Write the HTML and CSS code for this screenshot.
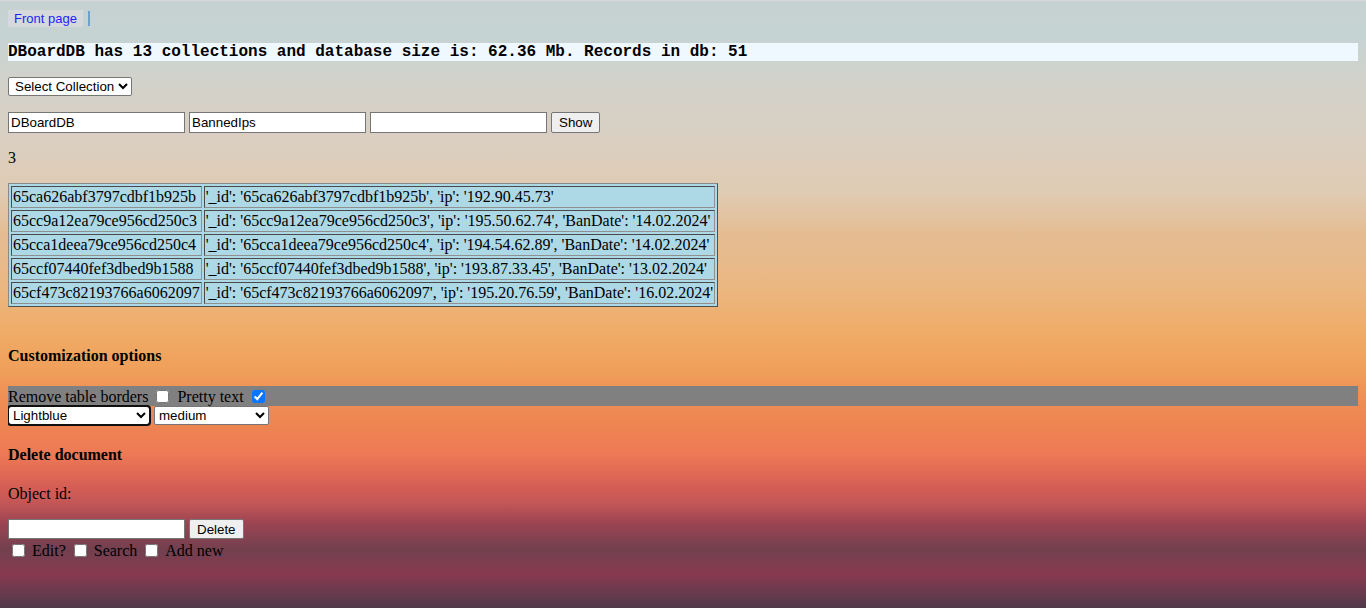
FILE: index.html
```html
<!DOCTYPE html>
<html>
<head>
<meta charset="utf-8">
<title>DBoard</title>
<link rel="stylesheet" href="styles.css">
</head>
<body>
<nav class="topnav">
  <a class="navlink" href="#">Front page</a>
  <span class="navsep"></span>
</nav>
<div class="dbinfo">DBoardDB has 13 collections and database size is: 62.36 Mb. Records in db: 51</div>
<div class="row">
  <select class="ctl sel-coll"><option>Select Collection</option></select>
</div>
<div class="row">
  <input class="ctl txt" type="text" value="DBoardDB">
  <input class="ctl txt" type="text" value="BannedIps">
  <input class="ctl txt" type="text" value="">
  <button class="ctl btn">Show</button>
</div>
<p class="count">3</p>
<table class="records">
  <tr><td>65ca626abf3797cdbf1b925b</td><td>'_id': '65ca626abf3797cdbf1b925b', 'ip': '192.90.45.73'</td></tr>
  <tr><td>65cc9a12ea79ce956cd250c3</td><td>'_id': '65cc9a12ea79ce956cd250c3', 'ip': '195.50.62.74', 'BanDate': '14.02.2024'</td></tr>
  <tr><td>65cca1deea79ce956cd250c4</td><td>'_id': '65cca1deea79ce956cd250c4', 'ip': '194.54.62.89', 'BanDate': '14.02.2024'</td></tr>
  <tr><td>65ccf07440fef3dbed9b1588</td><td>'_id': '65ccf07440fef3dbed9b1588', 'ip': '193.87.33.45', 'BanDate': '13.02.2024'</td></tr>
  <tr><td>65cf473c82193766a6062097</td><td>'_id': '65cf473c82193766a6062097', 'ip': '195.20.76.59', 'BanDate': '16.02.2024'</td></tr>
</table>
<h4 class="section first">Customization options</h4>
<div class="optbar">
  <span>Remove table borders</span><input class="chk" type="checkbox">
  <span>Pretty text</span><input class="chk" type="checkbox" checked>
</div>
<div class="selrow">
  <select class="ctl sel-color focused"><option>Lightblue</option></select>
  <select class="ctl sel-size"><option>medium</option></select>
</div>
<h4 class="section">Delete document</h4>
<p class="label">Object id:</p>
<div class="delrow">
  <input class="ctl txt" type="text" value="">
  <button class="ctl btn">Delete</button>
</div>
<div class="chkrow">
  <input class="chk" type="checkbox"><span>Edit?</span>
  <input class="chk" type="checkbox"><span>Search</span>
  <input class="chk" type="checkbox"><span>Add new</span>
</div>
</body>
</html>
```
FILE: styles.css
```css
html {
  height: 100%;
  background: linear-gradient(to bottom,
    #dadada 0px, #c6d2d2 2px, #c6d3d3 38px, #d1d2ca 80px, #d9cfc2 136px,
    #e0cbb2 194px, #e4bd94 232px, #ebb680 290px, #efac68 330px,
    #f0a05a 368px, #ef8d54 400px, #ee8452 426px, #ee7a55 453px,
    #d86055 484px, #c25656 504px, #9c4452 523px, #72404f 550px,
    #883a50 574px, #503a4a 608px);
  background-repeat: no-repeat;
}
body {
  margin: 8px;
  font-family: "Liberation Serif", "Times New Roman", serif;
  font-size: 16px;
  color: #000;
}
.topnav {
  display: flex;
  align-items: center;
  margin-top: 2px;
  height: 17px;
}
.navlink {
  font-family: "Liberation Sans", Arial, sans-serif;
  font-size: 13px;
  line-height: 17px;
  color: #1f1fff;
  text-decoration: none;
  background: #d5d9d9;
  padding: 0 6px;
}
.navsep {
  display: inline-block;
  width: 2px;
  height: 15px;
  margin-left: 5px;
  background: #6e9fd2;
}
.dbinfo {
  margin-top: 16px;
  background: #f0f8ff;
  font-family: "Liberation Mono", "Courier New", monospace;
  font-weight: bold;
  font-size: 16px;
  line-height: 18px;
  white-space: nowrap;
}
.row {
  margin-top: 16px;
  display: flex;
  gap: 4px;
  align-items: center;
}
.ctl {
  font-family: "Liberation Sans", Arial, sans-serif;
  font-size: 13.33px;
  color: #000;
  box-sizing: border-box;
  margin: 0;
}
.sel-coll { width: 124px; height: 19px; padding: 0 0 0 2px; border: 1px solid #767676; border-radius: 2px; background: #fff; }
.txt { width: 177px; height: 21px; border: 1px solid #767676; padding: 1px 2px; background: #fff; }
.btn { height: 21px; padding: 1px 7px; border: 1px solid #767676; border-radius: 2px; background: #efefef; }
.count { margin: 16px 0; line-height: 18px; }
.records {
  margin-top: 16px;
  background: #add8e6;
  border: 1px solid #6e7070;
  border-color: #8a8a8a #4f5050 #4f5050 #8a8a8a;
  border-spacing: 2px;
  line-height: 18px;
  white-space: nowrap;
}
.records td {
  border: 1px solid #555;
  border-color: #4a4a4a #909090 #909090 #4a4a4a;
  padding: 1px;
}
.section {
  font-size: 16px;
  font-weight: bold;
  margin: 21px 0;
  line-height: 18px;
}
.section.first { margin-top: 40px; }
.optbar {
  background: #808080;
  height: 20px;
  display: flex;
  align-items: center;
  white-space: nowrap;
  line-height: 20px;
  padding-top: 1px;
  box-sizing: border-box;
}
.chk {
  width: 13px;
  height: 13px;
  margin: 3px 3px 3px 4px;
  accent-color: #0a75ff;
}
.optbar .chk { margin: 0 8px 0 8px; }
.selrow {
  display: flex;
  gap: 4px;
  margin-top: 0;
}
.sel-color { width: 142px; height: 19px; border: 1px solid #767676; border-radius: 2px; background: #fff; }
.sel-color.focused { outline: 2px solid #101010; outline-offset: -1px; border-radius: 3px; }
.sel-size { width: 115px; height: 19px; border: 1px solid #767676; border-radius: 2px; background: #fff; }
.label { margin: 21px 0 16px; line-height: 18px; }
.delrow {
  display: flex;
  gap: 4px;
  margin-top: 16px;
}
.delrow .btn { height: 20px; }
.delrow .txt { height: 20px; }
.chkrow {
  display: flex;
  align-items: center;
  line-height: 18px;
  margin-top: 2px;
}
.chkrow span { margin-right: 4px; margin-left: 4px; }
```
